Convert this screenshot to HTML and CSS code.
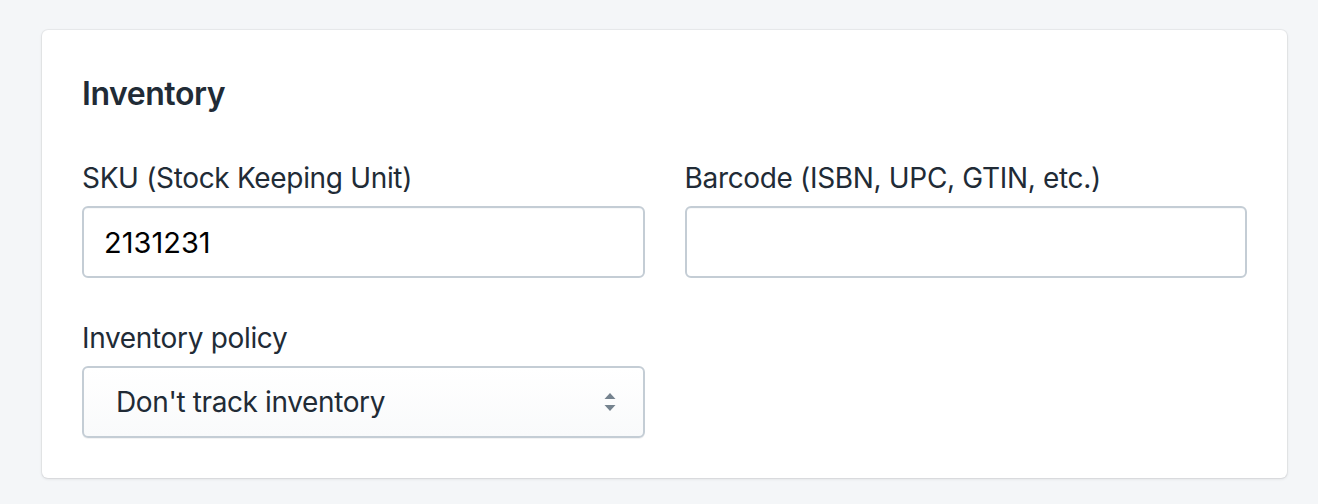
FILE: index.html
```html
<!DOCTYPE html>
<html lang="en">
<head>
<meta charset="utf-8">
<title>Inventory</title>
<link rel="stylesheet" href="styles.css">
</head>
<body>
<main class="page">
  <section class="card">
    <h2 class="card-title">Inventory</h2>
    <div class="form-grid">
      <div class="field">
        <label class="label" for="sku">SKU (Stock Keeping Unit)</label>
        <input class="text-input" id="sku" type="text" value="2131231">
      </div>
      <div class="field">
        <label class="label" for="barcode">Barcode (ISBN, UPC, GTIN, etc.)</label>
        <input class="text-input" id="barcode" type="text" value="">
      </div>
      <div class="field">
        <label class="label" for="policy">Inventory policy</label>
        <div class="select">
          <span class="select-value">Don't track inventory</span>
          <svg class="select-arrows" width="12" height="20" viewBox="0 0 12 20" aria-hidden="true">
            <path d="M6 1 L11.5 7 L0.5 7 Z" fill="#75838f"/>
            <path d="M0.5 13 L11.5 13 L6 19 Z" fill="#75838f"/>
          </svg>
        </div>
      </div>
    </div>
  </section>
</main>
</body>
</html>
```

FILE: styles.css
```css
* {
  box-sizing: border-box;
}

html, body {
  margin: 0;
  padding: 0;
  background: #f4f6f8;
}

body {
  font-family: Inter, "Liberation Sans", sans-serif;
  color: #212b36;
}

.page {
  padding: 30px 31px 26px 42px;
}

.card {
  background: #ffffff;
  border-radius: 6px;
  box-shadow: 0 0 0 1px rgba(63, 63, 68, 0.05), 0 1px 3px 0 rgba(63, 63, 68, 0.15);
  padding: 40px;
}

.card-title {
  margin: 0 0 40px;
  font-size: 32px;
  line-height: 48px;
  font-weight: 600;
  letter-spacing: -0.45px;
  color: #212b36;
}

.form-grid {
  display: grid;
  grid-template-columns: 1fr 1fr;
  column-gap: 40px;
  row-gap: 40px;
}

.field {
  display: flex;
  flex-direction: column;
}

.label {
  font-size: 28px;
  line-height: 40px;
  margin-bottom: 8px;
  letter-spacing: -0.33px;
  color: #212b36;
}

.text-input {
  height: 72px;
  border: 2px solid #c4cdd5;
  border-radius: 6px;
  padding: 0 20px;
  font-family: Inter, "Liberation Sans", sans-serif;
  font-size: 29px;
  color: #000000;
  background: #ffffff;
  box-shadow: inset 0 1px 0 0 rgba(99, 115, 129, 0.05);
  outline: none;
}

.select {
  height: 72px;
  border: 2px solid #c4cdd5;
  border-radius: 6px;
  padding: 0 27px 0 32px;
  display: flex;
  align-items: center;
  justify-content: space-between;
  background: linear-gradient(180deg, #ffffff, #f9fafb);
  box-shadow: 0 1px 0 0 rgba(22, 29, 37, 0.05);
}

.select-value {
  font-size: 28px;
  line-height: 40px;
  letter-spacing: -0.38px;
  color: #212b36;
}

.select-arrows {
  display: block;
}
```
